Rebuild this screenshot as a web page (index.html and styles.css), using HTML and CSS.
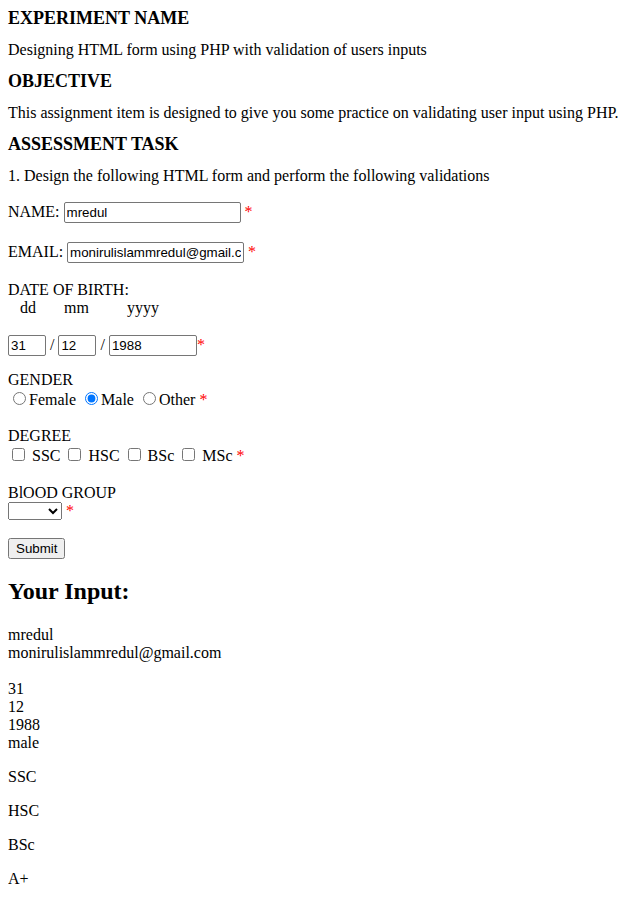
FILE: index.html
```
<!DOCTYPE html>
<html>
<head>
<meta charset="utf-8">
<title>Form Validation</title>
<link rel="stylesheet" href="styles.css">
</head>
<body>
<h3 class="sec-title">EXPERIMENT NAME</h3>
<p class="sec-text">Designing HTML form using PHP with validation of users inputs</p>
<h3 class="sec-title">OBJECTIVE</h3>
<p class="sec-text">This assignment item is designed to give you some practice on validating user input using PHP.</p>
<h3 class="sec-title">ASSESSMENT TASK</h3>
<p class="sec-text">1. Design the following HTML form and perform the following validations</p>

<form class="reg-form">
  <div class="row row-name">NAME: <input class="txt" type="text" value="mredul"> <span class="req">*</span></div>
  <div class="row row-email">EMAIL: <input class="txt" type="text" value="monirulislammredul@gmail.com"> <span class="req">*</span></div>
  <div class="row row-dob">DATE OF BIRTH:</div>
  <div class="row dob-hints"><span class="hint-dd">dd</span><span class="hint-mm">mm</span><span class="hint-yy">yyyy</span></div>
  <div class="row row-date"><input class="txt d-dd" type="text" value="31"> / <input class="txt d-mm" type="text" value="12"> / <input class="txt d-yy" type="text" value="1988"><span class="req">*</span></div>
  <div class="row row-label gender-label">GENDER</div>
  <div class="row row-opts"><input type="radio" name="g" class="rad">Female <input type="radio" name="g" class="rad" checked>Male <input type="radio" name="g" class="rad">Other <span class="req">*</span></div>
  <div class="row row-label degree-label">DEGREE</div>
  <div class="row row-opts"><input type="checkbox" class="chk"> SSC <input type="checkbox" class="chk"> HSC <input type="checkbox" class="chk"> BSc <input type="checkbox" class="chk"> MSc <span class="req">*</span></div>
  <div class="row row-label blood-label">BlOOD GROUP</div>
  <div class="row row-select"><select class="sel"><option></option></select> <span class="req">*</span></div>
  <div class="row row-submit"><input class="btn" type="submit" value="Submit"></div>
</form>

<h2 class="out-title">Your Input:</h2>
<div class="out-block">mredul<br>monirulislammredul@gmail.com<br><br>31<br>12<br>1988<br>male</div>
<p class="out-p">SSC</p>
<p class="out-p">HSC</p>
<p class="out-p">BSc</p>
<p class="out-p">A+</p>
</body>
</html>
```
FILE: styles.css
```
html, body {
  background: #ffffff;
}
body {
  margin: 8px;
  font-family: "Liberation Serif", "Times New Roman", serif;
  font-size: 16px;
  color: #000000;
}
.sec-title {
  font-size: 18px;
  line-height: 21.5px;
  font-weight: bold;
  margin: 0 0 11.8px 0;
}
.sec-text {
  margin: 11.8px 0;
}
.reg-form {
  margin: 0;
}
.row {
  line-height: normal;
}
.txt {
  font-family: "Liberation Sans", Arial, sans-serif;
  font-size: 13.33px;
  width: 177px;
  height: 21px;
  box-sizing: border-box;
  padding: 1px 2px;
  border: 1px solid #767676;
  border-radius: 2px;
  margin: 0;
  color: #000;
}
.row-name { margin-top: 17px; }
.row-email { margin-top: 19px; }
.row-dob { margin-top: 18px; }
.dob-hints { margin-top: 0; }
.hint-dd { margin-left: 12px; }
.hint-mm { margin-left: 28px; }
.hint-yy { margin-left: 38px; }
.row-date { margin-top: 18px; }
.d-dd { width: 38px; }
.d-mm { width: 38px; }
.d-yy { width: 88px; }
.req { color: #ff0000; }
.gender-label { margin-top: 15px; }
.degree-label { margin-top: 18px; }
.blood-label { margin-top: 19px; }
.rad { margin: 3px 3px 0 5px; }
.chk { margin: 3px 3px 3px 4px; }
.sel {
  width: 54px;
  height: 18px;
  font-family: "Liberation Sans", Arial, sans-serif;
  font-size: 13.33px;
  margin: 0;
}
.row-select { margin-top: 0; }
.row-submit { margin-top: 18px; }
.btn {
  font-family: "Liberation Sans", Arial, sans-serif;
  font-size: 13.33px;
  margin: 0;
  width: 57px;
  height: 21px;
}
.out-title {
  font-size: 24px;
  font-weight: bold;
  margin: 19px 0 21px 0;
}
.out-block {
  margin-top: 0;
  line-height: normal;
}
.out-p {
  margin: 16px 0;
}
```
